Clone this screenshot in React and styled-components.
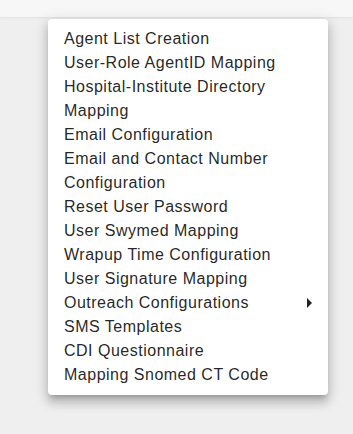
import React from "react";
import styled, { createGlobalStyle } from "styled-components";

const Global = createGlobalStyle`
  html, body { margin: 0; padding: 0; background: #efefef; }
  body { font-family: "Liberation Sans", Arial, sans-serif; }
`;

const Page = styled.div`
  width: 353px;
  height: 434px;
  background: #efefef;
  overflow: hidden;
  position: relative;
`;

const Header = styled.div`
  height: 17px;
  background: #f7f7f7;
  box-shadow: 0 1px 2px rgba(0, 0, 0, 0.06);
  overflow: hidden;
  padding-left: 52px;
`;

const HeaderText = styled.div`
  font-size: 16px;
  line-height: 24px;
  color: #333;
  margin-top: -20px;
  letter-spacing: 0.5px;
  white-space: nowrap;
`;

const Menu = styled.ul`
  position: absolute;
  left: 48px;
  top: 19px;
  width: 280px;
  box-sizing: border-box;
  margin: 0;
  padding: 8px 0;
  list-style: none;
  background: #fff;
  border-radius: 4px;
  box-shadow: 0px 5px 5px -3px rgba(0, 0, 0, 0.2),
    0px 8px 10px 1px rgba(0, 0, 0, 0.14), 0px 3px 14px 2px rgba(0, 0, 0, 0.12);
`;

const Item = styled.li`
  display: flex;
  align-items: center;
  padding: 0 16px;
  font-size: 16px;
  line-height: 24px;
  letter-spacing: 0.5px;
  color: rgba(0, 0, 0, 0.87);
  cursor: pointer;
`;

const Label = styled.span`
  flex: 1;
`;

const Caret = styled.span`
  width: 0;
  height: 0;
  border-top: 5px solid transparent;
  border-bottom: 5px solid transparent;
  border-left: 5px solid rgba(0, 0, 0, 0.87);
`;

const items = [
  "Agent List Creation",
  "User-Role AgentID Mapping",
  "Hospital-Institute Directory Mapping",
  "Email Configuration",
  "Email and Contact Number Configuration",
  "Reset User Password",
  "User Swymed Mapping",
  "Wrapup Time Configuration",
  "User Signature Mapping",
  { label: "Outreach Configurations", sub: true },
  "SMS Templates",
  "CDI Questionnaire",
  "Mapping Snomed CT Code",
];

export default function App() {
  return (
    <Page>
      <Global />
      <Header>
        <HeaderText>Settings Master Directory</HeaderText>
      </Header>
      <Menu>
        {items.map((it) => {
          const label = typeof it === "string" ? it : it.label;
          const sub = typeof it !== "string" && it.sub;
          return (
            <Item key={label}>
              <Label>{label}</Label>
              {sub && <Caret />}
            </Item>
          );
        })}
      </Menu>
    </Page>
  );
}
